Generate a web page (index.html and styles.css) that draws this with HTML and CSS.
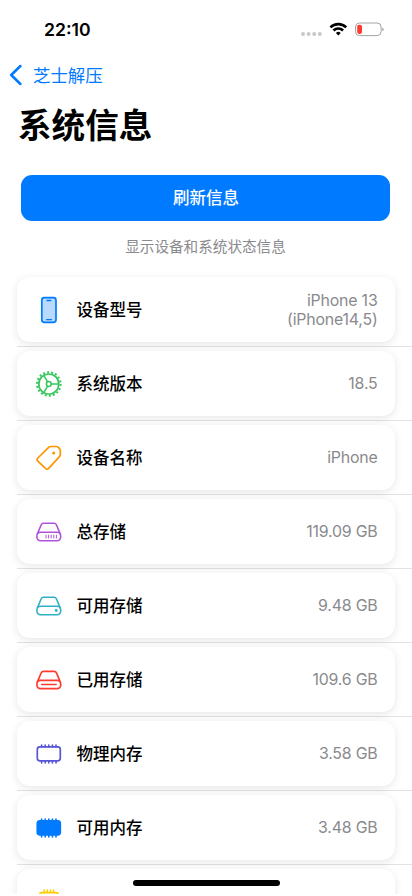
FILE: index.html
```html
<!DOCTYPE html>
<html lang="zh-CN">
<head>
<meta charset="utf-8">
<meta name="viewport" content="width=device-width, initial-scale=1">
<title>系统信息</title>
<link rel="stylesheet" href="styles.css">
</head>
<body>
<div class="screen">
  <header class="status">
    <span class="time">22:10</span>
    <svg class="status-icons" width="84" height="16" viewBox="0 0 84 16">
      <g fill="#c8c8ca"><circle cx="3" cy="12" r="2"/><circle cx="8.6" cy="12" r="2"/><circle cx="14.2" cy="12" r="2"/><circle cx="19.8" cy="12" r="2"/></g>
      <g fill="none" stroke="#000" stroke-width="2.6"><path d="M30.4 5.4a11.2 11.2 0 0 1 15.8 0"/><path d="M33.5 8.5a6.8 6.8 0 0 1 9.6 0"/></g>
      <path d="M38.3 13.6l-2.4-2.6a3.4 3.4 0 0 1 4.8 0z" fill="#000"/>
      <rect x="55.5" y="1" width="25.6" height="12.6" rx="4" fill="none" stroke="#a3a3a3" stroke-width="1"/>
      <rect x="57.2" y="2.7" width="4.8" height="9.2" rx="1.8" fill="#ff3b30"/>
      <path d="M82.3 5.4q1.4.5 1.4 1.9t-1.4 1.9z" fill="#a3a3a3"/>
    </svg>
  </header>
  <nav class="nav">
    <svg width="13" height="22" viewBox="0 0 13 22" fill="none" stroke="#007aff" stroke-width="2.5" stroke-linecap="round" stroke-linejoin="round"><path d="M11.4 2L2.2 11l9.2 9"/></svg>
    <span>芝士解压</span>
  </nav>
  <h1>系统信息</h1>
  <button class="refresh">刷新信息</button>
  <p class="caption">显示设备和系统状态信息</p>
  <ul class="list">
    <li class="row"><div class="card">
      <svg class="icon" viewBox="0 0 28 28"><rect x="6.8" y="1.6" width="14.2" height="24.8" rx="2.6" fill="#b9d9ff" stroke="#007aff" stroke-width="1.7"/><path d="M12 4.5h3.8M11.5 23.6h5" stroke="#007aff" stroke-width="1.3" stroke-linecap="round"/></svg>
      <span class="label">设备型号</span><span class="value">iPhone 13<br>(iPhone14,5)</span></div></li>
    <li class="row"><div class="card">
      <svg class="icon" viewBox="0 0 28 28" fill="none" stroke="#34c759"><circle cx="13.8" cy="14" r="10" stroke-width="1.7"/><circle cx="13.8" cy="14" r="11.8" stroke-width="2" stroke-dasharray="1.9 2.219"/><circle cx="13.8" cy="14" r="2.4" stroke-width="1.5"/><path d="M16.2 14h7.6M12.6 11.9L8.8 5.4M12.6 16.1l-3.8 6.5" stroke-width="1.5"/></svg>
      <span class="label">系统版本</span><span class="value">18.5</span></div></li>
    <li class="row"><div class="card">
      <svg class="icon" viewBox="0 0 28 28"><path d="M16 2.5H21.4Q22.5 2.5 23.3 3.3L24.5 4.6Q25.3 5.4 25.3 6.6V10.3Q25.3 12 24.1 13.2L13.6 24.4Q12 26 10.4 24.4L2.9 17.2Q1.3 15.6 2.9 14L13.4 3.6Q14.5 2.5 16 2.5Z" fill="none" stroke="#ff9500" stroke-width="1.7"/><circle cx="18.6" cy="8.9" r="1.5" fill="#ff9500"/></svg>
      <span class="label">设备名称</span><span class="value">iPhone</span></div></li>
    <li class="row"><div class="card">
      <svg class="icon" viewBox="0 0 28 28" fill="none" stroke="#af52de" stroke-width="1.6"><path d="M2.2 16.4L6 7.2Q6.8 5.3 8.6 5.3H19Q20.8 5.3 21.6 7.2L25.4 16.4"/><rect x="1.9" y="14.3" width="23.8" height="8.4" rx="3.6"/><path d="M11 16.8v3.6M13.6 16.8v3.6M16.2 16.8v3.6M18.8 16.8v3.6M21.4 16.8v3.6" stroke-width="1"/></svg>
      <span class="label">总存储</span><span class="value">119.09 GB</span></div></li>
    <li class="row"><div class="card">
      <svg class="icon" viewBox="0 0 28 28" fill="none" stroke="#30b0c7" stroke-width="1.6"><path d="M2.2 16.4L6 7.2Q6.8 5.3 8.6 5.3H19Q20.8 5.3 21.6 7.2L25.4 16.4"/><rect x="1.9" y="14.3" width="23.8" height="8.4" rx="3.6"/><circle cx="21.2" cy="18.5" r="1.4" fill="#30b0c7" stroke="none"/></svg>
      <span class="label">可用存储</span><span class="value">9.48 GB</span></div></li>
    <li class="row"><div class="card">
      <svg class="icon" viewBox="0 0 28 28" fill="none" stroke="#ff3b30" stroke-width="1.7"><path d="M2.2 16.4L6 7.2Q6.8 5.3 8.6 5.3H19Q20.8 5.3 21.6 7.2L25.4 16.4"/><rect x="1.9" y="14.3" width="23.8" height="8.4" rx="3.6"/><path d="M6.6 18.5h14.6" stroke-width="1.4" stroke-linecap="round"/></svg>
      <span class="label">已用存储</span><span class="value">109.6 GB</span></div></li>
    <li class="row"><div class="card">
      <svg class="icon" viewBox="0 0 28 28" fill="none" stroke="#5856d6"><rect x="2.3" y="6.9" width="23" height="14" rx="2.6" stroke-width="1.7"/><path d="M6.6 5V7M10.2 5V7M13.8 5V7M17.4 5V7M21 5V7M6.6 21v2M10.2 21v2M13.8 21v2M17.4 21v2M21 21v2" stroke-width="1.6" stroke-linecap="round"/></svg>
      <span class="label">物理内存</span><span class="value">3.58 GB</span></div></li>
    <li class="row"><div class="card">
      <svg class="icon" viewBox="0 0 28 28" fill="#007aff" stroke="#007aff"><rect x="2.3" y="6.9" width="23" height="14" rx="2.6" stroke-width="1.7"/><path d="M6.6 5V7M10.2 5V7M13.8 5V7M17.4 5V7M21 5V7M6.6 21v2M10.2 21v2M13.8 21v2M17.4 21v2M21 21v2" stroke-width="1.6" stroke-linecap="round"/></svg>
      <span class="label">可用内存</span><span class="value">3.48 GB</span></div></li>
    <li class="row"><div class="card">
      <svg class="icon" viewBox="0 0 28 28" fill="none" stroke="#ffcc00"><rect x="4.8" y="4.6" width="18.2" height="18.2" rx="1.6" stroke-width="1.8"/><path d="M9.2 2V4.5M12.3 2V4.5M15.5 2V4.5M18.6 2V4.5" stroke-width="1.5" stroke-linecap="round"/></svg>
      </div></li>
  </ul>
  <div class="home"></div>
</div>
</body>
</html>
```
FILE: styles.css
```css
* { box-sizing: border-box; }
html { background: #fff; }
body {
  margin: 0;
  background: #fff;
  color: #000;
  font-family: Inter, "Noto Sans CJK SC", sans-serif;
}
.screen {
  position: relative;
  width: 412px;
  height: 894px;
  overflow: hidden;
  background: #fff;
}
.status {
  display: flex;
  justify-content: space-between;
  align-items: center;
  height: 59px;
  padding: 0 28px 0 44px;
}
.time { font-size: 17.6px; font-weight: 600; line-height: 20px; }
.nav {
  display: flex;
  align-items: center;
  gap: 11px;
  height: 32px;
  padding-left: 9px;
  color: #007aff;
  font-size: 17.4px;
  line-height: 32px;
}
.nav span { padding-top: 1px; }
h1 {
  margin: 11px 0 0 18px;
  font-size: 33.6px;
  font-weight: 700;
  line-height: 48px;
}
.refresh {
  display: block;
  width: 369px;
  height: 46px;
  margin: 24.5px 0 0 21.4px;
  padding: 1px 0 0;
  border: 0;
  border-radius: 11px;
  background: #007aff;
  color: #fff;
  font: 500 16.5px/45px Inter, "Noto Sans CJK SC", sans-serif;
}
.caption {
  margin: 15.5px 0 0 -1px;
  color: #8a8a8e;
  font-size: 14.6px;
  line-height: 22px;
  text-align: center;
}
.list {
  margin: 15px 0 0;
  padding: 0 0 0 17px;
  list-style: none;
}
.row {
  height: 74px;
  padding: 4px 17.5px 4px 0;
  border-bottom: 1px solid #e2e2e4;
}
.card {
  display: flex;
  align-items: center;
  height: 65px;
  padding: 0 17px 0 18px;
  border-radius: 13px;
  background: #fff;
  box-shadow: 0 2px 8px rgba(0, 0, 0, .1);
}
.icon { width: 28px; height: 28px; flex: none; margin-top: 1px; }
.label { margin-left: 13.5px; padding-top: 1px; font-size: 16.5px; font-weight: 500; line-height: 24px; }
.value {
  margin-left: auto;
  color: #8a8a8e;
  font-size: 15.9px;
  line-height: 19px;
  letter-spacing: -.2px;
  text-align: right;
}
.row:first-child .value { padding-top: 1px; }
.home {
  position: absolute;
  left: 133px;
  top: 880px;
  width: 147px;
  height: 5.5px;
  border-radius: 3px;
  background: #000;
}
```
